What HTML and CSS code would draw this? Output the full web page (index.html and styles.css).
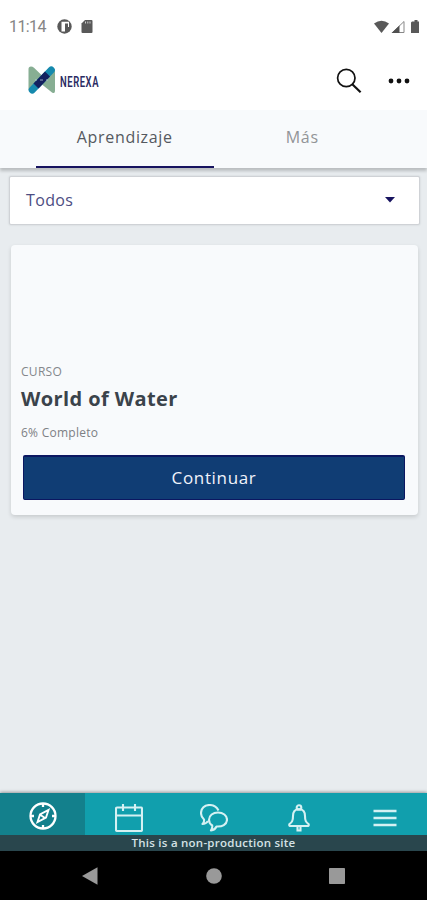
FILE: index.html
```html
<!DOCTYPE html>
<html lang="es">
<head>
<meta charset="utf-8">
<title>Nerexa</title>
<link rel="stylesheet" href="styles.css">
</head>
<body>
<div class="phone">
  <div class="status">
    <span class="clock">11:14</span>
    <svg class="status-app" width="15" height="15" viewBox="0 0 15 15"><circle cx="7.500" cy="7.500" r="7.200" fill="#595959"/><path d="M4.500 2.800H12V8H8v4.500H4.500z" fill="#fff"/><path d="M8 4.500h3V8H8z" fill="#595959"/></svg>
    <svg width="12" height="13" viewBox="0 0 12 13"><path d="M4 0h6.500a1 1 0 0 1 1 1v11a1 1 0 0 1-1 1H1.500a1 1 0 0 1-1-1V3.500z" fill="#595959"/><path d="M4.500 1.500v2M6.800 1.500v2M9 1.500v2" stroke="#ccc"/></svg>
    <svg class="status-right" width="48" height="14" viewBox="0 0 48 14"><path d="M1 3.500Q8.500-2 16 3.500L8.500 13z" fill="#595959"/><path d="M31 1.500V12.500H19.500z" fill="#fff" stroke="#888"/><path d="M26.500 5.500V13H18.500z" fill="#505050"/><path d="M40 1.500h1.500V0h3v1.500H46V13h-8V2.500l1-1z" fill="#595959"/></svg>
  </div>
  <header class="header">
    <svg class="logo" width="28" height="30" viewBox="0 0 28 30">
      <path d="M3 1.500Q.5 1.500.5 4v21L14 19.500 24 27.500Q27 29 27 26V4L14 10.500 6 2.800Q4.500 1.500 3 1.500z" fill="#87ae93"/>
      <path d="M4.200 25L23.300 5" stroke="#1589ad" stroke-width="7" stroke-linecap="round"/>
      <path d="M8 21L19.500 9" stroke="#13205f" stroke-width="7"/>
      <path d="M7 15h2M12 15h3M18 15h2" stroke="#b9cbd8" stroke-width=".8"/>
    </svg>
    <span class="logo-text">NEREXA</span>
    <svg class="search" width="28" height="28" viewBox="0 0 28 28" fill="none" stroke="#111"><circle cx="11.300" cy="11" r="8.700" stroke-width="1.700"/><path d="M17.300 17.200l8.300 8" stroke-width="2.200"/></svg>
    <svg class="more" width="22" height="6" viewBox="0 0 22 6" fill="#111"><circle cx="3" cy="3" r="2.400"/><circle cx="11" cy="3" r="2.400"/><circle cx="19" cy="3" r="2.400"/></svg>
  </header>
  <nav class="tabs">
    <a class="tab tab-active">Aprendizaje</a>
    <a class="tab">Más</a>
  </nav>
  <main class="content">
    <div class="select"><span>Todos</span><svg width="10" height="6" viewBox="0 0 10 6"><path d="M0 0h10L5 5.500z" fill="#17135f"/></svg></div>
    <article class="card">
      <div class="kind">CURSO</div>
      <h2 class="title">World of Water</h2>
      <div class="progress">6% Completo</div>
      <button class="button">Continuar</button>
    </article>
  </main>
  <nav class="bottom">
    <a class="item item-active"><svg width="28" height="28" viewBox="0 0 28 28" fill="none" stroke="#fff" stroke-width="2.300"><circle cx="14" cy="14" r="12.500"/><path d="M14 1.500v3.500M14 23v3.500M1.500 14H5M23 14h3.500"/><path d="M8.500 20l2.500-7.500L19.500 8 17 15.500zM11.500 13l4.500 3" stroke-width="1.900"/></svg></a>
    <a class="item"><svg width="28" height="28" viewBox="0 0 28 28" fill="none" stroke="#d5f1f3" stroke-width="2.100"><rect x="1" y="3.500" width="26" height="23.500" rx="1"/><path d="M1 11.500h26M8 0v7M20 0v7"/></svg></a>
    <a class="item"><svg width="28" height="28" viewBox="0 0 28 28" fill="none" stroke="#d5f1f3" stroke-width="2.100" stroke-linejoin="round"><path d="M18.500 6.500C16.500 2.500 13 1 9.500 1 4.500 1 1 4.500 1 9q0 4 3 6.500Q4.500 18 2.500 20 6 20 8 17"/><path d="M18 8.500c-5 0-9 3-9 7.200 0 2.500 1.200 4.500 3.200 5.800q.3 3-1.200 5 4-.5 5.500-4c5.500.5 10.500-2 10.500-6.800 0-4.200-4-7.200-9-7.200z"/></svg></a>
    <a class="item"><svg width="22" height="28" viewBox="0 0 22 28" fill="none" stroke="#d5f1f3" stroke-width="2.100"><circle cx="11" cy="3.500" r="2.300"/><path d="M11 5C6.500 5 5 8.500 5 12c0 5-1 6-3.500 8Q.5 22 3 22h16q2.500 0 1.500-2C18 18 17 17 17 12c0-3.500-1.500-7-6-7z"/><path d="M9.500 23v3.500h3V23"/></svg></a>
    <a class="item"><svg width="24" height="28" viewBox="0 0 24 28" stroke="#d5f1f3" stroke-width="2.400"><path d="M.5 7h23M.5 14h23M.5 21h23"/></svg></a>
  </nav>
  <div class="notice">This is a non-production site</div>
  <div class="system">
    <svg width="16" height="18" viewBox="0 0 16 18"><path d="M0 9L15.500.3v17.400z" fill="#999"/></svg>
    <svg width="16" height="16" viewBox="0 0 16 16"><circle cx="8" cy="8" r="7.800" fill="#999"/></svg>
    <svg width="16" height="16" viewBox="0 0 16 16"><rect width="16" height="16" rx=".8" fill="#999"/></svg>
  </div>
</div>
</body>
</html>
```
FILE: styles.css
```css
* { box-sizing: border-box; }
body { margin: 0; font-family: "Open Sans", sans-serif; }
svg { display: block; flex: none; }
.phone { width: 427px; height: 900px; display: flex; flex-direction: column; background: #e8ecef; overflow: hidden; }
.status { height: 52px; flex: none; padding: 1px 6px 0 9px; display: flex; align-items: center; background: #fff; }
.clock { width: 48px; font: 16px Roboto, sans-serif; letter-spacing: -.6px; color: #858585; }
.status-app { margin-right: 9px; }
.status-right { margin-left: auto; }
.header { height: 58px; flex: none; padding: 0 17px 1px 28px; display: flex; align-items: center; background: #fff; }
.logo { margin-top: -1px; }
.logo-text { width: 60px; margin: 2px 0 0 4px; font: 600 15px/20px Roboto, sans-serif; letter-spacing: .9px; color: #2a2a62; transform: scaleX(.63); transform-origin: 0 50%; }
.search { margin-left: auto; margin-right: 25px; }
.tabs { height: 58px; flex: none; padding: 0 36px; display: flex; background: #f8fafc; box-shadow: 0 3px 3px rgba(0,0,0,.2); }
.tab { flex: 1; height: 58px; line-height: 55px; text-align: center; font-size: 16px; letter-spacing: .68px; color: #929497; }
.tab-active { color: #555960; border-bottom: 2px solid #17135f; }
.content { flex: 1; padding: 8px 9px 0; }
.select { height: 49px; margin-right: -2px; padding: 0 24px 1px 16px; display: flex; align-items: center; justify-content: space-between; border: 1px solid #cfd2d6; border-radius: 2px; box-shadow: 0 0 2px #c5c9cc; background: #fff; font-size: 16px; letter-spacing: .35px; color: #4c4d82; }
.card { height: 270px; margin: 20px 0 0 2px; padding: 117px 12px 14px 10px; border-radius: 4px; background: #f8fafc; box-shadow: 0 2px 4px rgba(0,0,0,.14); }
.kind { height: 20px; line-height: 20px; font-size: 12px; letter-spacing: .3px; color: #84878b; }
.title { margin: 2px 0 0; height: 30px; line-height: 30px; font-size: 20px; font-weight: 700; letter-spacing: .4px; color: #3b434b; }
.progress { margin-top: 9px; height: 20px; line-height: 20px; font-size: 12px; letter-spacing: .25px; color: #7d8084; }
.button { display: block; width: 382px; height: 45px; margin: 12px 0 0 2px; padding: 0 0 1px; border: 1px solid #0b1761; border-top-width: 2px; border-radius: 2px; background: #103d74; color: #f0f3fb; font: 500 17px "Open Sans", sans-serif; letter-spacing: .65px; }
.bottom { height: 42px; display: flex; flex: none; background: #119fad; box-shadow: 0 -1px 3px rgba(0,0,0,.35); }
.item { flex: 1; display: flex; justify-content: center; padding: 11px 0 0 1px; }
.item-active { background: #13808c; padding-top: 9px; }
.notice { height: 16px; flex: none; line-height: 16px; background: #29464d; color: #d5e2e5; font-size: 11.5px; font-weight: 600; letter-spacing: .25px; text-align: center; }
.system { height: 49px; flex: none; padding: 0 82px; display: flex; align-items: center; justify-content: space-between; background: #000; }
```
